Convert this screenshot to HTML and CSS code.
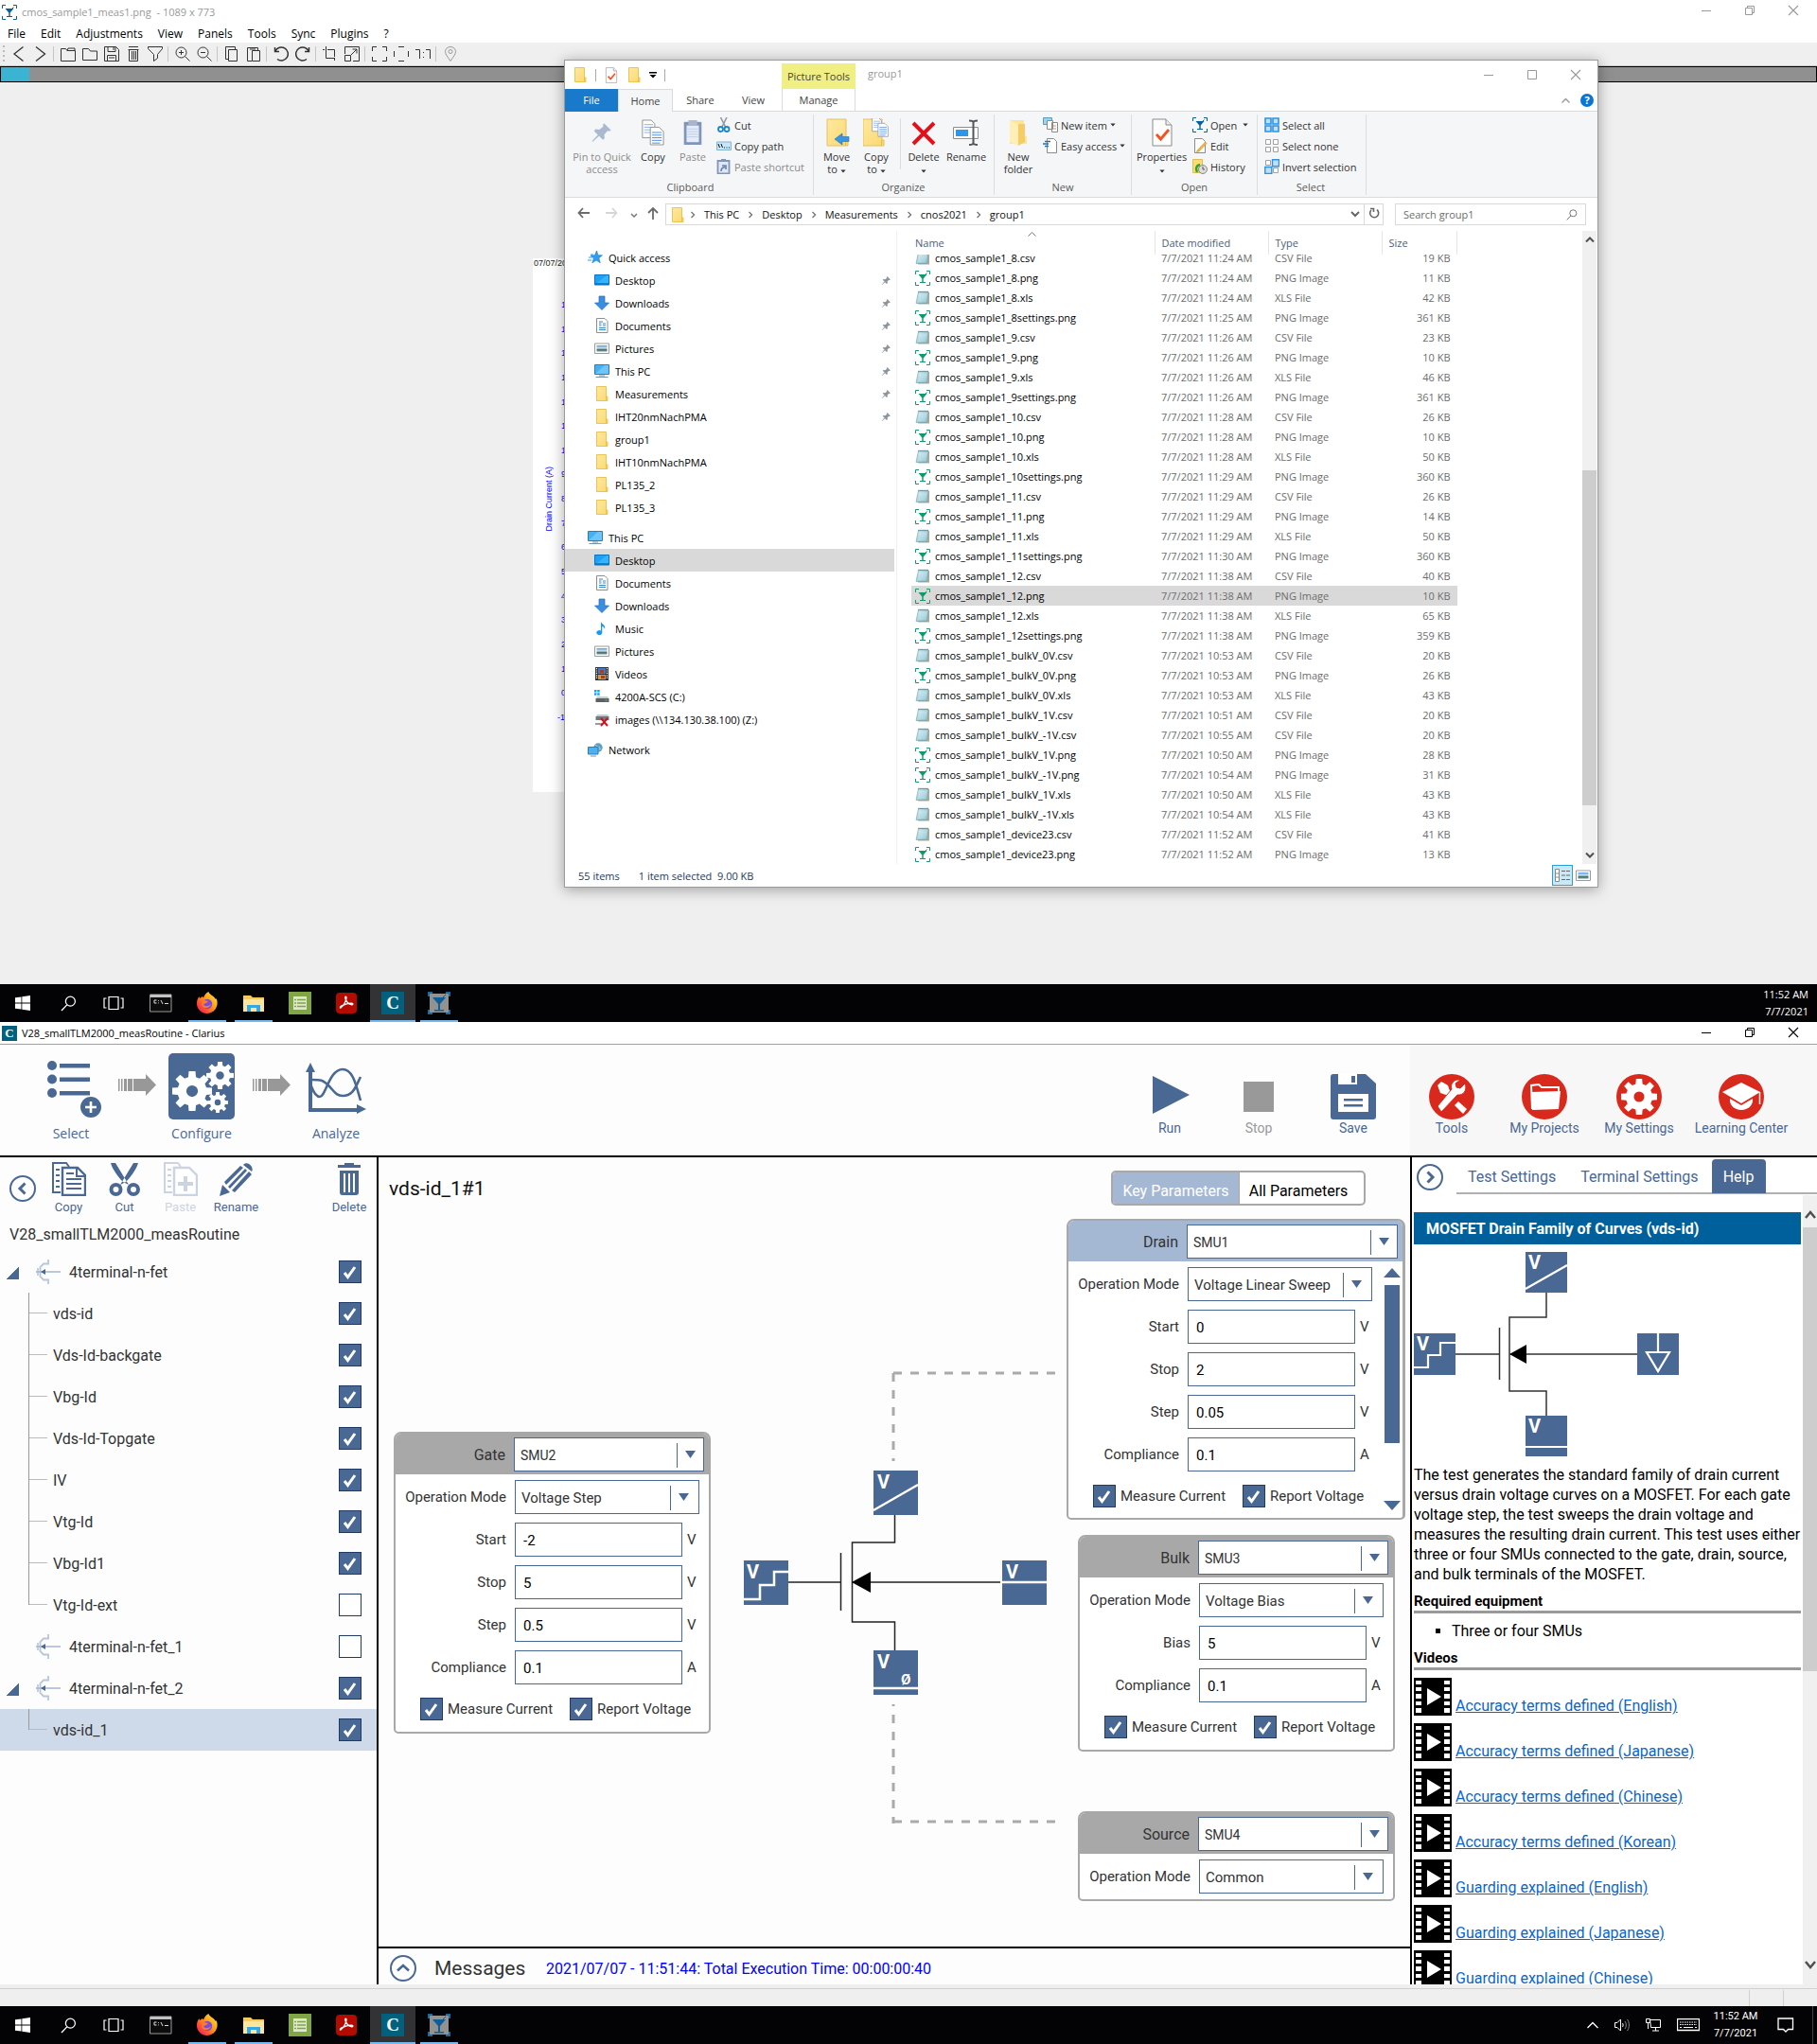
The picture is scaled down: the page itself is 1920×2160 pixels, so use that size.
FILE: index.html
```html
<!DOCTYPE html>
<html lang="en">
<head>
<meta charset="utf-8">
<title>V28_smallTLM2000_measRoutine - Clarius</title>
<link rel="stylesheet" href="styles.css">
</head>
<body>
<svg class="sprite" aria-hidden="true">
  <defs>
    <linearGradient id="g-folder" x1="0" y1="0" x2="1" y2="1"><stop offset="0" stop-color="#ffe9a2"/><stop offset="1" stop-color="#fbd96f"/></linearGradient>
    <linearGradient id="g-fox" x1="1" y1="0" x2="0" y2="1"><stop offset="0" stop-color="#fff14f"/><stop offset=".45" stop-color="#ff980e"/><stop offset=".8" stop-color="#ff3647"/><stop offset="1" stop-color="#e31587"/></linearGradient>
    <linearGradient id="g-sheet" x1="0" y1="0" x2="1" y2="1"><stop offset="0" stop-color="#d9f1f5"/><stop offset="1" stop-color="#7db9cb"/></linearGradient>
    <linearGradient id="g-pic" x1="0" y1="0" x2="0" y2="1"><stop offset="0" stop-color="#5a9fe0"/><stop offset=".5" stop-color="#d4e8f5"/><stop offset=".6" stop-color="#3f6b5a"/><stop offset="1" stop-color="#6f97a8"/></linearGradient>
  </defs>
  <symbol id="glass" viewBox="0 0 16 16"><path d="M.5 4V.5h3.500M12 .5h3.500V4M15.500 12v3.500H12M4 15.500H.5V12" fill="none" stroke="currentColor"/><path d="M3.500 4h9L8.700 8.400V12H11v1H5v-1h2.300V8.400z" fill="currentColor"/><path d="M10.500 4.500l2-2" stroke="currentColor"/></symbol>
  <symbol id="sheet" viewBox="0 0 16 16"><path d="M4 2h11v12.500H3z" fill="#b9a98a"/><path d="M3.500 1.500h10.500l-1 12H1z" fill="url(#g-sheet)" stroke="#6f9dab" stroke-width=".6"/><path d="M3.500 1.500h10.500" stroke="#4e6f7a" stroke-width="1.400" stroke-dasharray="1 1"/><path d="M4 5h8M4 7h8M3.500 9h8M3.300 11h8" stroke="#fff" stroke-opacity=".55" stroke-width=".7"/></symbol>
  <symbol id="folder" viewBox="0 0 16 16"><path d="M2.500 .5h10v10.500h1.500v4.500H2.500z" fill="url(#g-folder)" stroke="#e8bf47" stroke-width=".9"/><path d="M12.500 11v4" stroke="#e8bf47"/></symbol>
  <symbol id="bigfolder" viewBox="0 0 28 30"><path d="M4 1h20v22h2v6H4z" fill="url(#g-folder)" stroke="#e3bd53" stroke-width=".9"/><path d="M23.500 23v6" stroke="#e3bd53"/></symbol>
  <symbol id="star" viewBox="0 0 16 16"><path d="M9.500 1l1.500 4.700 4.500.1-3.700 2.900 1.500 5-4.200-2.600-4.300 2.700 1.600-4.900L3 6l4.500-.2z" fill="#2e9ef0" stroke="#1478c4" stroke-width=".6"/><path d="M1 8h4M0 11h4M3 5h3" stroke="#2e9ef0"/></symbol>
  <symbol id="desk" viewBox="0 0 16 16"><path d="M.5 2.500h15v10.500H.5z" fill="#1ba1f7" stroke="#0a72bf"/><path d="M1 12h14" stroke="#0f5e99"/><path d="M3 11L13 3h2v8z" fill="#37b4ff"/></symbol>
  <symbol id="down" viewBox="0 0 16 16"><path d="M5 1h6v7h4.500L8 15.500.5 8H5z" fill="#3a8ee0" stroke="#226fb9" stroke-width=".7"/></symbol>
  <symbol id="docs" viewBox="0 0 16 16"><path d="M2.500 .5h8.500l3 3v12H2.500z" fill="#fff" stroke="#8a8f94"/><path d="M5 6h2.500M5 8h2.500M9 6h3M9 8h3M5 10.500h7M5 12.500h7M5 4h4" stroke="#3b87c8"/></symbol>
  <symbol id="pics" viewBox="0 0 16 16"><path d="M.5 3h15v10.500H.5z" fill="#fff" stroke="#9b9b9b"/><path d="M2.500 5h11v6.500h-11z" fill="url(#g-pic)"/></symbol>
  <symbol id="pc" viewBox="0 0 16 16"><path d="M.5 1.500h15v10H.5z" fill="#45b1f5" stroke="#2c7fb5"/><path d="M1 11L11 2h4v9z" fill="#6fc5fa"/><path d="M1.500 14.500h13M5 13h6" stroke="#7694a8"/></symbol>
  <symbol id="music" viewBox="0 0 16 16"><path d="M7 1c1 3 5 3 4 8-.5-2-1.500-3-2.700-3v6.500a3 2.500 0 1 1-1.300-2z" fill="#1a97ee"/></symbol>
  <symbol id="video" viewBox="0 0 16 16"><path d="M1 1h14v14H1z" fill="#333"/><path d="M4 2h8v6H4z" fill="#3f79c8"/><path d="M4 9h8v5H4z" fill="#d0a03a"/><path d="M6 4h4v3H6zM7 10h4v3H7z" fill="#a53b2b"/><path d="M2.500 2v12M13.500 2v12" stroke="#fff" stroke-width="1.200" stroke-dasharray="1.200 1.200"/></symbol>
  <symbol id="drive" viewBox="0 0 16 16"><path d="M3 8h11l1.500 2H2z" fill="#c9ccce"/><path d="M1.500 10h14v4h-14z" fill="#5c6165"/><path d="M11.500 12h2" stroke="#3bdc55"/><path d="M0 1h2.500v2.500H0zM3.200 1h2.500v2.500H3.200zM0 4.200h2.500v2.500H0zM3.200 4.200h2.500v2.500H3.200z" fill="#18a4ec"/></symbol>
  <symbol id="netdrive" viewBox="0 0 16 16"><path d="M3 3h11l1.500 2H2z" fill="#c9ccce"/><path d="M1.500 5h14v4h-14z" fill="#74787c"/><path d="M1 13h8" stroke="#999" stroke-width="2"/><path d="M7 7l7 8M14 7l-7 8" stroke="#cf1020" stroke-width="2"/></symbol>
  <symbol id="net" viewBox="0 0 16 16"><circle cx="11" cy="6" r="4.700" fill="#5f9fc0"/><path d="M8 3c2 1 2 3 5 3M10 10c0-2 3-2 4-3" stroke="#b8dcea" fill="none"/><path d="M.5 5.500h10.500v7.500H.5z" fill="#4cb0f2" stroke="#2c7fb5"/><path d="M3 15h6" stroke="#7694a8"/></symbol>
  <symbol id="pin" viewBox="0 0 16 16"><path d="M9.500 1.500l5 5-1.500.7-1-.3-2.300 2.600.2 2.700-1.200.9L6 10.500l-4.500 4-.5-.5 4.200-4.400L2.500 7l1-1.300 2.700.3L9 3.900l-.3-1.200z" fill="currentColor"/></symbol>
  <symbol id="tri" viewBox="0 0 8 5"><path d="M.5.500h7L4 4.500z" fill="currentColor"/></symbol>
  <symbol id="page" viewBox="0 0 28 30"><path d="M4 1h14l6 6v22H4z" fill="#fdfdfd" stroke="#8b8b8b"/><path d="M18 1v6h6" fill="#eee" stroke="#8b8b8b"/><path d="M8 17l4.500 5L21 12" fill="none" stroke="#f4511e" stroke-width="2.800"/></symbol>
  <symbol id="copies" viewBox="0 0 28 30"><path d="M2 1h10l4 4v16H2z" fill="#fdfdfd" stroke="#909090"/><path d="M4 6h10M4 9h10M4 12h10M4 15h10" stroke="#86aee8"/><path d="M11 9h10l5 5v15H11z" fill="#fdfdfd" stroke="#909090"/><path d="M13 15h11M13 18h11M13 21h11M13 24h11M13 27h9" stroke="#4a88dc"/></symbol>
  <symbol id="clip" viewBox="0 0 28 30"><path d="M4 3h20v26H4z" fill="#8194b9"/><path d="M7 7h14v19H7z" fill="#e3ecf8"/><path d="M9 1h10v6H9z" fill="#a9b5cc"/><path d="M8 11h12M8 14h12M8 17h12M8 20h12" stroke="#bccbe4"/></symbol>
  <symbol id="win" viewBox="0 0 16 16"><path d="M0 2.300l6.500-.9v6.200H0zM7.300 1.300L16 0v7.600H7.300zM0 8.400h6.500v6.200L0 13.700zM7.300 8.400H16V16l-8.700-1.200z" fill="#fff"/></symbol>
  <symbol id="lens" viewBox="0 0 18 18"><circle cx="11" cy="6.500" r="5.300" fill="none" stroke="currentColor" stroke-width="1.300"/><path d="M7.200 10.500L1 17" stroke="currentColor" stroke-width="1.400"/></symbol>
  <symbol id="tasks" viewBox="0 0 22 16"><path d="M6 1.500h10v13H6zM3.500 3H1v10h2.500M18.500 3H21v10h-2.500" fill="none" stroke="#fff" stroke-width="1.200"/></symbol>
  <symbol id="cmd" viewBox="0 0 24 20"><path d="M.5 1h22.500v18H.5z" fill="#0c0c0c" stroke="#9a9a9a"/><path d="M1 1h22v3H1z" fill="#bfc3c6"/><path d="M7.500 7H5v3h2.500M9.500 7v.8M9.500 9.500v.8M12 7l2 4M16 10.500h4" stroke="#ddd" fill="none"/></symbol>
  <symbol id="fox" viewBox="0 0 24 24"><path d="M12 23a11 10.500 0 0 1-11-11c0-3 1-5 2.500-7l.5 2 3-2 1 1.500c1-3 3-5.500 5.500-6.500.3 3 5.500 4 7.500 8l.5-1c1.300 3 1.400 5 .8 7.500A11 10.500 0 0 1 12 23z" fill="url(#g-fox)"/><circle cx="12" cy="13" r="5.200" fill="#7a4be0"/><path d="M6 10c3-2 5 0 7 0-1 2-3 2-5 3 1 3 5 3 8 0-1 5-9 6-10 0z" fill="#ff7a2a"/></symbol>
  <symbol id="files" viewBox="0 0 24 20"><path d="M1 2h8l2 2h12v15H1z" fill="#f6c95a"/><path d="M1 6h22v13H1z" fill="#ffe59a"/><path d="M5 19v-7h14v7h-4v-4H9v4z" fill="#35a6e6"/></symbol>
  <symbol id="green" viewBox="0 0 24 24"><path d="M0 0h24v24H0z" fill="#7fa545"/><path d="M5 5h14v14H5z" fill="#dfe8cd"/><path d="M6 8.500h2M9 8.500h9M6 12h2M9 12h9M6 15.500h2M9 15.500h9" stroke="#7fa545" stroke-width="1.500"/></symbol>
  <symbol id="pdf" viewBox="0 0 22 22"><rect width="22" height="22" rx="4" fill="#b30b00"/><path d="M5 16c3-2 6-7 6-11 0-1-1.500-1-1.200.5.500 4 4 7 7.200 7.200 1.300 0 1-1.400-.3-1.500-4-.3-7 1-11 3-1.500 1-1.500 2-.7 1.800z" fill="none" stroke="#fff" stroke-width="1.400"/></symbol>
  <symbol id="cup" viewBox="0 0 24 24"><path d="M2 2h20v20H2z" fill="#929292"/><path d="M1 5V1h4M19 1h4v4M23 19v4h-4M5 23H1v-4" fill="none" stroke="#1a6a9e" stroke-width="2"/><path d="M5 6h14l-6 7v6h4v1.500H7V19h4v-6z" fill="#0f5f96"/><path d="M16 6l3-3" stroke="#0f5f96"/></symbol>
  <symbol id="min" viewBox="0 0 12 12"><path d="M1 6.500h10" stroke="currentColor"/></symbol>
  <symbol id="max" viewBox="0 0 12 12"><path d="M1.500 1.500h9v9h-9z" fill="none" stroke="currentColor"/></symbol>
  <symbol id="restore" viewBox="0 0 12 12"><path d="M1.500 3.500h7v7h-7zM3.500 3.500v-2h7v7h-2" fill="none" stroke="currentColor"/></symbol>
  <symbol id="x" viewBox="0 0 12 12"><path d="M1 1l10 10M11 1L1 11" stroke="currentColor" stroke-width="1.100"/></symbol>
  <symbol id="gt" viewBox="0 0 8 8"><path d="M2.500 1l3 3-3 3" fill="none" stroke="currentColor" stroke-width="1.400"/></symbol>
  <symbol id="fet" viewBox="0 0 26 26"><path d="M13 0v4.500H8L4.500 8v10L8 21.500h5V26" fill="none" stroke="#b9c5d9" stroke-width="1.800"/><path d="M2 9v8" stroke="#c6d0e0" stroke-width="2"/><path d="M0 13h26" stroke="#a9bad4" stroke-width="1.600"/><path d="M5 13l5-3v6z" fill="#4a6894"/></symbol>
  <symbol id="step" viewBox="0 0 40 23"><path d="M0 5h1.500v13H0zM3 5h1.500v13H3zM6 5h3v13H6zM10 5h5v13h-5zM16 5h13V0l11 11.500L29 23v-5H16z" fill="#989898"/></symbol>
  <symbol id="film" viewBox="0 0 40 40"><path d="M0 0h40v40H0z"/><path d="M2 3h6v4H2zM2 10h6v4H2zM2 17h6v5H2zM2 25h6v4H2zM2 32h6v5H2zM32 3h6v4h-6zM32 10h6v4h-6zM32 17h6v5h-6zM32 25h6v4h-6zM32 32h6v5h-6zM14 11l15 9-15 9z" fill="#fff"/></symbol>
  <symbol id="gear8" viewBox="-12 -12 24 24"><path fill-rule="evenodd" d="M-2.300-8.500L-2-12h4l.3 3.500 2.200.9 2.700-2.300 2.800 2.800-2.300 2.700.9 2.200 3.400.2v4l-3.400.3-.9 2.200 2.300 2.700-2.800 2.800-2.700-2.300-2.200.9L2 12h-4l-.3-3.400-2.200-.9-2.700 2.300-2.800-2.800 2.300-2.700-.9-2.200-3.400-.3v-4l3.400-.2.900-2.200-2.300-2.700 2.800-2.800 2.700 2.300zM0-3.500a3.500 3.500 0 1 0 0 7 3.500 3.500 0 0 0 0-7z" fill="#fff"/></symbol>
</svg>

<section class="screen">
  <header class="viewer-title">
    <svg class="navy" width="16" height="16"><use href="#glass"/></svg>
    <span class="grow">cmos_sample1_meas1.png &nbsp;- 1089 x 773</span>
    <span class="winbtns"><button aria-label="Minimize"><svg width="12" height="12"><use href="#min"/></svg></button><button aria-label="Restore"><svg width="12" height="12"><use href="#restore"/></svg></button><button aria-label="Close"><svg width="12" height="12"><use href="#x"/></svg></button></span>
  </header>
  <nav class="menu"><button>File</button><button>Edit</button><button>Adjustments</button><button>View</button><button>Panels</button><button>Tools</button><button>Sync</button><button>Plugins</button><button>?</button></nav>
  <div class="tools">
    <i class="grip"></i>
    <button aria-label="Previous"><svg viewBox="0 0 16 16"><path d="M12.500.5L3 8l9.500 7.500" stroke-width="1.300"/></svg></button>
    <button aria-label="Next"><svg viewBox="0 0 16 16"><path d="M3 .5L12.500 8 3 15.500" stroke-width="1.300"/></svg></button><i></i>
    <button aria-label="Open"><svg viewBox="0 0 16 16"><path d="M.5 15.500v-13h5l1.500 2h8.500v11zM7 4.500l1-2.500h7v2.500"/></svg></button>
    <button aria-label="Folder"><svg viewBox="0 0 16 16"><path d="M.5 14.500v-12h6l2 2.500h7v9.500z"/></svg></button>
    <button aria-label="Save"><svg viewBox="0 0 16 16"><path d="M.5.500h12l3 3v12H.5zM4 .5v5h8v-5M3.500 15.500v-6h9v6M10 1v3M5 12h6"/></svg></button>
    <button aria-label="Trash"><svg viewBox="0 0 16 16"><path d="M3.500 3.500h9v12h-9zM3 .5h10M2.500 3.500h11M6.500 5v9M8.500 5v9M10.500 5v9"/></svg></button>
    <button aria-label="Filter"><svg viewBox="0 0 16 16"><path d="M.5.500h15v2l-5 6v4l-4 3v-7l-6-6z"/></svg></button><i></i>
    <button aria-label="Zoom in"><svg viewBox="0 0 16 16"><circle cx="6.500" cy="6.500" r="5.500"/><path d="M10.500 10.500l5 5M4 6.500h5M6.500 4v5"/></svg></button>
    <button aria-label="Zoom out"><svg viewBox="0 0 16 16"><circle cx="6.500" cy="6.500" r="5.500"/><path d="M10.500 10.500l5 5M4 6.500h5"/></svg></button><i></i>
    <button aria-label="Copy"><svg viewBox="0 0 16 16"><path d="M4.500 3.500h9v12h-9zM4.500 13.500h-3V.500h10v3"/></svg></button>
    <button aria-label="Paste"><svg viewBox="0 0 16 16"><path d="M6 15.500H1.500v-14h11v3M6.500 4.500h8v11h-8zM4 3h6"/></svg></button><i></i>
    <button aria-label="Rotate left"><svg viewBox="0 0 16 16"><path d="M2 5a7 7 0 1 1 2 8.500M1.500 1v4.500H6" stroke-width="1.500"/></svg></button>
    <button aria-label="Rotate right"><svg viewBox="0 0 16 16"><path d="M14 5a7 7 0 1 0-2 8.500M14.500 1v4.500H10" stroke-width="1.500"/></svg></button><i></i>
    <button aria-label="Crop"><svg viewBox="0 0 16 16"><path d="M3.500 0v12.500H13M0 3.500h2M5 3.500h7.500V11M12.500 12v3"/></svg></button>
    <button aria-label="Resize"><svg viewBox="0 0 16 16"><path d="M.5 8v-7.500h15v15H9M.5 9.500h6v6h-6zM7 9l6-6M8.500 3H13v4.500"/></svg></button><i></i>
    <button aria-label="Fit"><svg viewBox="0 0 16 16"><path d="M.5 5V.500H5M11 .5h4.500V5M15.500 11v4.500H11M5 15.500H.500V11"/></svg></button>
    <button aria-label="Fit image"><svg viewBox="0 0 16 16"><path d="M5 .500h6M5 15.500h6M.5 5v6M15.500 5v6"/></svg></button>
    <button aria-label="Actual size"><svg viewBox="0 0 16 16"><path d="M0 3.500h4.500V13M11 3.500h4.500V13M8.500 6v1M8.500 11v1"/></svg></button><i></i>
    <button aria-label="Location"><svg viewBox="0 0 16 16" class="dim"><path d="M8 15.500C5 11 2.500 8.500 2.500 5.500a5.500 5 0 0 1 11 0c0 3-2.500 5.500-5.500 10z"/><circle cx="8" cy="5.500" r="2"/></svg></button>
  </div>
  <div class="progress"><span></span></div>
  <div class="stage"></div>

  <div class="plot">
    <span class="plot-date">07/07/2021</span>
    <span class="plot-axis">Drain Current (A)</span>
    <ol class="ticks"><li>16</li><li>15</li><li>14</li><li>13</li><li>12</li><li>11</li><li>10</li><li>9</li><li>8</li><li>7</li><li>6</li><li>5</li><li>4</li><li>3</li><li>2</li><li>1</li><li>0</li><li class="neg">-1</li></ol>
  </div>

  <section class="explorer">
    <header class="ex-head">
      <div class="ex-quick"><svg width="16" height="16"><use href="#folder"/></svg><i></i><svg width="16" height="17"><use href="#page"/></svg><svg width="16" height="16"><use href="#folder"/></svg><svg width="8" height="8" viewBox="0 0 8 8"><path d="M0 1h8v1.500H0zM.5 4h7L4 7.500z"/></svg><i></i></div>
      <div class="ex-ctx">Picture Tools</div>
      <span class="grow ex-name">group1</span>
      <span class="winbtns"><button aria-label="Minimize"><svg width="12" height="12"><use href="#min"/></svg></button><button aria-label="Maximize"><svg width="12" height="12"><use href="#max"/></svg></button><button aria-label="Close"><svg width="12" height="12"><use href="#x"/></svg></button></span>
    </header>
    <nav class="ex-tabs">
      <button class="t-file">File</button><button class="t-home">Home</button><button class="t-share">Share</button><button class="t-view">View</button><button class="t-manage">Manage</button>
      <span class="grow"></span>
      <svg width="9" height="6" viewBox="0 0 9 6"><path d="M.5 5.500l4-4 4 4" fill="none" stroke="#999" stroke-width="1.400"/></svg>
      <span class="help-dot">?</span>
    </nav>
    <div class="ribbon">
      <div class="group g-clip"><div class="items">
        <button class="big w64 off"><svg width="24" height="24" class="pinbig"><use href="#pin"/></svg><span>Pin to Quick access</span></button>
        <button class="big w44"><svg width="26" height="30"><use href="#copies"/></svg><span>Copy</span></button>
        <button class="big w40 off"><svg width="26" height="30"><use href="#clip"/></svg><span>Paste</span></button>
        <div class="stack">
          <button><svg width="16" height="16" viewBox="0 0 16 16"><path d="M4.500 0l5 10M11 0L6 10" stroke="#8f9aa6" stroke-width="1.600"/><circle cx="4.500" cy="12.500" r="2.500" fill="none" stroke="#1c86c8" stroke-width="1.800"/><circle cx="11" cy="12.500" r="2.500" fill="none" stroke="#1c86c8" stroke-width="1.800"/></svg>Cut</button>
          <button><svg width="16" height="16" viewBox="0 0 16 16"><path d="M.5 4h15v8.500H.500z" fill="#c8e6f8" stroke="#82b4d4"/><path d="M2 6l1.500 4M5 6l1.500 4M8 10h1M10.500 10h1M13 10h1" stroke="#111"/></svg>Copy path</button>
          <button class="off"><svg width="16" height="16" viewBox="0 0 16 16"><path d="M1.500 2h12v13.500h-12z" fill="#dfe8f4" stroke="#8194b9" stroke-width="1.800"/><path d="M5 0h5v3H5z" fill="#8194b9"/><path d="M5 13c0-3 1-4 4-4.500M6 7h4v4" stroke="#6a80ab" fill="none" stroke-width="1.600"/></svg>Paste shortcut</button>
        </div></div><p>Clipboard</p></div>
      <div class="group g-org"><div class="items">
        <button class="big w42"><svg width="28" height="30" viewBox="0 0 28 30"><use href="#bigfolder" width="28" height="30"/><path d="M12 22l8-6v3.500h7v5h-7V28z" fill="#3a96e3" stroke="#1f6fb5" stroke-width=".6"/></svg><span>Move<br>to <svg width="6" height="4"><use href="#tri"/></svg></span></button>
        <button class="big w42"><svg width="28" height="30" viewBox="0 0 28 30"><use href="#bigfolder" width="28" height="30" x="-4"/><use href="#copies" x="8" y="-1" width="20" height="21"/></svg><span>Copy<br>to <svg width="6" height="4"><use href="#tri"/></svg></span></button>
        <i class="thin"></i>
        <button class="big w40"><svg width="26" height="30" viewBox="0 0 26 30"><path d="M2 5l22 22M24 5L2 27" stroke="#e0101c" stroke-width="4"/></svg><span>Delete <svg width="6" height="4"><use href="#tri"/></svg></span></button>
        <button class="big w50"><svg width="28" height="30" viewBox="0 0 28 30"><path d="M.5 9.500h26v12H.500z" fill="#fff" stroke="#8c8c8c"/><path d="M3 12h13v7H3z" fill="#2c96e8"/><path d="M21.500 4v23M17 2.500c3 0 4.500.500 4.500 2 0-1.500 1.500-2 4.500-2M17 28c3 0 4.500-.5 4.500-2 0 1.500 1.500 2 4.500 2" stroke="#555" stroke-width="2" fill="none"/></svg><span>Rename</span></button>
      </div><p>Organize</p></div>
      <div class="group g-new"><div class="items">
        <button class="big w42"><svg width="22" height="30" viewBox="0 0 22 30"><path d="M2 2h15v16l3 1v8H2z" fill="#ffe494"/><path d="M2 2l9 4v23l-9-4z" fill="#ffeeb5"/><path d="M11 6h7v19l-7 4z" fill="#f5cd66"/></svg><span>New folder</span></button>
        <div class="stack">
          <button><svg width="16" height="16" viewBox="0 0 16 16"><path d="M.5.500h9v7h-9z" fill="#9dd3ef" stroke="#5a9dc0"/><path d="M4.500 3.500h6v9h-6zM9.500 5.500h6v10h-6z" fill="#fff" stroke="#8b8b8b"/><path d="M11 9h3M11 12h3" stroke="#e08a7a"/></svg>New item<svg width="6" height="4"><use href="#tri"/></svg></button>
          <button><svg width="16" height="16" viewBox="0 0 16 16"><path d="M4.500.500h7l3 3v12h-10z" fill="#fff" stroke="#8b8b8b"/><path d="M2 3.500h6M0 6h6M2 8.500h4" stroke="#2a72a8" stroke-width="1.300"/></svg>Easy access<svg width="6" height="4"><use href="#tri"/></svg></button>
        </div></div><p>New</p></div>
      <div class="group g-open"><div class="items">
        <button class="big w55"><svg width="28" height="30"><use href="#page"/></svg><span>Properties <svg width="6" height="4"><use href="#tri"/></svg></span></button>
        <div class="stack">
          <button><svg width="16" height="16" class="navy"><use href="#glass"/></svg>Open&nbsp;<svg width="6" height="4"><use href="#tri"/></svg></button>
          <button><svg width="16" height="16" viewBox="0 0 16 16"><path d="M2.500.500h8l3 3v12h-11z" fill="#fff" stroke="#8b8b8b"/><path d="M5 13l8.500-9 1.500 1.500L7 14l-2.500.500z" fill="#f5b83d" stroke="#b98220" stroke-width=".5"/></svg>Edit</button>
          <button><svg width="16" height="16" viewBox="0 0 16 16"><path d="M.5.500h10v14H.500z" fill="#fbdc77" stroke="#e3bd53"/><circle cx="11" cy="11" r="4.500" fill="#ddd" stroke="#888"/><path d="M11 8v3h2" stroke="#555" fill="none"/><path d="M8 6c-4 1-5 4-3 8" stroke="#2ca52c" stroke-width="2.500" fill="none"/></svg>History</button>
        </div></div><p>Open</p></div>
      <div class="group g-sel"><div class="items">
        <div class="stack">
          <button><svg width="16" height="16" viewBox="0 0 16 16"><path d="M1 1h6v6H1zM9 1h6v6H9zM1 9h6v6H1zM9 9h6v6H9z" fill="#bfe0fa" stroke="#2e93e0" stroke-width="1.600"/></svg>Select all</button>
          <button><svg width="16" height="16" viewBox="0 0 16 16"><path d="M1.500 1.500h5v5h-5zM9.500 1.500h5v5h-5zM1.500 9.500h5v5h-5zM9.500 9.500h5v5h-5z" fill="#fff" stroke="#a0a0a0"/></svg>Select none</button>
          <button><svg width="16" height="16" viewBox="0 0 16 16"><path d="M1.500 1.500h5v5h-5zM9.500 9.500h5v5h-5z" fill="#fff" stroke="#a0a0a0"/><path d="M8.500.800h7v7h-7zM.800 8.500h7v7h-7z" fill="#bfe0fa" stroke="#2e93e0" stroke-width="1.400"/></svg>Invert selection</button>
        </div></div><p>Select</p></div>
    </div>
    <div class="address">
      <button class="arr" aria-label="Back"><svg width="14" height="12" viewBox="0 0 14 12"><path d="M6 1L1.500 6 6 11M1.500 6H13" fill="none" stroke="#6b6b6b" stroke-width="1.800"/></svg></button>
      <button class="arr" aria-label="Forward"><svg width="14" height="12" viewBox="0 0 14 12"><path d="M8 1l4.500 5L8 11M12.500 6H1" fill="none" stroke="#d6d6d6" stroke-width="1.800"/></svg></button>
      <button class="arr sm" aria-label="Recent"><svg width="8" height="6" viewBox="0 0 8 6"><path d="M1 1l3 3 3-3" fill="none" stroke="#777" stroke-width="1.500"/></svg></button>
      <button class="arr sm" aria-label="Up"><svg width="12" height="13" viewBox="0 0 12 13"><path d="M1 6l5-5 5 5M6 1v12" fill="none" stroke="#6b6b6b" stroke-width="1.800"/></svg></button>
      <div class="crumbs"><svg width="16" height="16" class="here"><use href="#folder"/></svg><svg width="8" height="8"><use href="#gt"/></svg><a href="#">This PC</a><svg width="8" height="8"><use href="#gt"/></svg><a href="#">Desktop</a><svg width="8" height="8"><use href="#gt"/></svg><a href="#">Measurements</a><svg width="8" height="8"><use href="#gt"/></svg><a href="#">cnos2021</a><svg width="8" height="8"><use href="#gt"/></svg><a href="#">group1</a><span class="grow"></span><svg width="10" height="7" viewBox="0 0 10 7"><path d="M1 1l4 4 4-4" fill="none" stroke="#666" stroke-width="2"/></svg><button class="reload" aria-label="Refresh"><svg width="12" height="12" viewBox="0 0 12 12"><path d="M3 3a4.500 4.500 0 1 0 6-.3M2 1.500h3.500V5" fill="none" stroke="#666" stroke-width="1.600"/></svg></button></div>
      <label class="search"><input type="text" placeholder="Search group1" aria-label="Search group1"><svg width="12" height="12"><use href="#lens"/></svg></label>
    </div>
    <div class="ex-body">
      <ul class="side">
        <li class="top"><svg><use href="#star"/></svg>Quick access</li>
        <li><svg><use href="#desk"/></svg>Desktop<svg class="pin"><use href="#pin"/></svg></li>
        <li><svg><use href="#down"/></svg>Downloads<svg class="pin"><use href="#pin"/></svg></li>
        <li><svg><use href="#docs"/></svg>Documents<svg class="pin"><use href="#pin"/></svg></li>
        <li><svg><use href="#pics"/></svg>Pictures<svg class="pin"><use href="#pin"/></svg></li>
        <li><svg><use href="#pc"/></svg>This PC<svg class="pin"><use href="#pin"/></svg></li>
        <li><svg><use href="#folder"/></svg>Measurements<svg class="pin"><use href="#pin"/></svg></li>
        <li><svg><use href="#folder"/></svg>IHT20nmNachPMA<svg class="pin"><use href="#pin"/></svg></li>
        <li><svg><use href="#folder"/></svg>group1</li>
        <li><svg><use href="#folder"/></svg>IHT10nmNachPMA</li>
        <li><svg><use href="#folder"/></svg>PL135_2</li>
        <li><svg><use href="#folder"/></svg>PL135_3</li>
        <li class="top"><svg><use href="#pc"/></svg>This PC</li>
        <li class="on"><svg><use href="#desk"/></svg>Desktop</li>
        <li><svg><use href="#docs"/></svg>Documents</li>
        <li><svg><use href="#down"/></svg>Downloads</li>
        <li><svg><use href="#music"/></svg>Music</li>
        <li><svg><use href="#pics"/></svg>Pictures</li>
        <li><svg><use href="#video"/></svg>Videos</li>
        <li><svg><use href="#drive"/></svg>4200A-SCS (C:)</li>
        <li><svg><use href="#netdrive"/></svg>images (\\134.130.38.100) (Z:)</li>
        <li class="top"><svg><use href="#net"/></svg>Network</li>
      </ul>
      <div class="list">
        <svg class="sort" width="9" height="5" viewBox="0 0 9 5"><path d="M.5 4.500l4-4 4 4" fill="none" stroke="#777"/></svg>
        <table>
          <thead><tr><th>Name</th><th>Date modified</th><th>Type</th><th>Size</th></tr></thead>
          <tbody>
          <tr class="cut"><td><div><svg><use href="#sheet"/></svg>cmos_sample1_8.csv</div></td><td><div>7/7/2021 11:24 AM</div></td><td><div>CSV File</div></td><td><div>19 KB</div></td></tr>
          <tr><td><svg><use href="#glass"/></svg>cmos_sample1_8.png</td><td>7/7/2021 11:24 AM</td><td>PNG Image</td><td>11 KB</td></tr>
          <tr><td><svg><use href="#sheet"/></svg>cmos_sample1_8.xls</td><td>7/7/2021 11:24 AM</td><td>XLS File</td><td>42 KB</td></tr>
          <tr><td><svg><use href="#glass"/></svg>cmos_sample1_8settings.png</td><td>7/7/2021 11:25 AM</td><td>PNG Image</td><td>361 KB</td></tr>
          <tr><td><svg><use href="#sheet"/></svg>cmos_sample1_9.csv</td><td>7/7/2021 11:26 AM</td><td>CSV File</td><td>23 KB</td></tr>
          <tr><td><svg><use href="#glass"/></svg>cmos_sample1_9.png</td><td>7/7/2021 11:26 AM</td><td>PNG Image</td><td>10 KB</td></tr>
          <tr><td><svg><use href="#sheet"/></svg>cmos_sample1_9.xls</td><td>7/7/2021 11:26 AM</td><td>XLS File</td><td>46 KB</td></tr>
          <tr><td><svg><use href="#glass"/></svg>cmos_sample1_9settings.png</td><td>7/7/2021 11:26 AM</td><td>PNG Image</td><td>361 KB</td></tr>
          <tr><td><svg><use href="#sheet"/></svg>cmos_sample1_10.csv</td><td>7/7/2021 11:28 AM</td><td>CSV File</td><td>26 KB</td></tr>
          <tr><td><svg><use href="#glass"/></svg>cmos_sample1_10.png</td><td>7/7/2021 11:28 AM</td><td>PNG Image</td><td>10 KB</td></tr>
          <tr><td><svg><use href="#sheet"/></svg>cmos_sample1_10.xls</td><td>7/7/2021 11:28 AM</td><td>XLS File</td><td>50 KB</td></tr>
          <tr><td><svg><use href="#glass"/></svg>cmos_sample1_10settings.png</td><td>7/7/2021 11:29 AM</td><td>PNG Image</td><td>360 KB</td></tr>
          <tr><td><svg><use href="#sheet"/></svg>cmos_sample1_11.csv</td><td>7/7/2021 11:29 AM</td><td>CSV File</td><td>26 KB</td></tr>
          <tr><td><svg><use href="#glass"/></svg>cmos_sample1_11.png</td><td>7/7/2021 11:29 AM</td><td>PNG Image</td><td>14 KB</td></tr>
          <tr><td><svg><use href="#sheet"/></svg>cmos_sample1_11.xls</td><td>7/7/2021 11:29 AM</td><td>XLS File</td><td>50 KB</td></tr>
          <tr><td><svg><use href="#glass"/></svg>cmos_sample1_11settings.png</td><td>7/7/2021 11:30 AM</td><td>PNG Image</td><td>360 KB</td></tr>
          <tr><td><svg><use href="#sheet"/></svg>cmos_sample1_12.csv</td><td>7/7/2021 11:38 AM</td><td>CSV File</td><td>40 KB</td></tr>
          <tr class="on"><td><svg><use href="#glass"/></svg>cmos_sample1_12.png</td><td>7/7/2021 11:38 AM</td><td>PNG Image</td><td>10 KB</td></tr>
          <tr><td><svg><use href="#sheet"/></svg>cmos_sample1_12.xls</td><td>7/7/2021 11:38 AM</td><td>XLS File</td><td>65 KB</td></tr>
          <tr><td><svg><use href="#glass"/></svg>cmos_sample1_12settings.png</td><td>7/7/2021 11:38 AM</td><td>PNG Image</td><td>359 KB</td></tr>
          <tr><td><svg><use href="#sheet"/></svg>cmos_sample1_bulkV_0V.csv</td><td>7/7/2021 10:53 AM</td><td>CSV File</td><td>20 KB</td></tr>
          <tr><td><svg><use href="#glass"/></svg>cmos_sample1_bulkV_0V.png</td><td>7/7/2021 10:53 AM</td><td>PNG Image</td><td>26 KB</td></tr>
          <tr><td><svg><use href="#sheet"/></svg>cmos_sample1_bulkV_0V.xls</td><td>7/7/2021 10:53 AM</td><td>XLS File</td><td>43 KB</td></tr>
          <tr><td><svg><use href="#sheet"/></svg>cmos_sample1_bulkV_1V.csv</td><td>7/7/2021 10:51 AM</td><td>CSV File</td><td>20 KB</td></tr>
          <tr><td><svg><use href="#sheet"/></svg>cmos_sample1_bulkV_-1V.csv</td><td>7/7/2021 10:55 AM</td><td>CSV File</td><td>20 KB</td></tr>
          <tr><td><svg><use href="#glass"/></svg>cmos_sample1_bulkV_1V.png</td><td>7/7/2021 10:50 AM</td><td>PNG Image</td><td>28 KB</td></tr>
          <tr><td><svg><use href="#glass"/></svg>cmos_sample1_bulkV_-1V.png</td><td>7/7/2021 10:54 AM</td><td>PNG Image</td><td>31 KB</td></tr>
          <tr><td><svg><use href="#sheet"/></svg>cmos_sample1_bulkV_1V.xls</td><td>7/7/2021 10:50 AM</td><td>XLS File</td><td>43 KB</td></tr>
          <tr><td><svg><use href="#sheet"/></svg>cmos_sample1_bulkV_-1V.xls</td><td>7/7/2021 10:54 AM</td><td>XLS File</td><td>43 KB</td></tr>
          <tr><td><svg><use href="#sheet"/></svg>cmos_sample1_device23.csv</td><td>7/7/2021 11:52 AM</td><td>CSV File</td><td>41 KB</td></tr>
          <tr><td><svg><use href="#glass"/></svg>cmos_sample1_device23.png</td><td>7/7/2021 11:52 AM</td><td>PNG Image</td><td>13 KB</td></tr>
          </tbody>
        </table>
      </div>
      <div class="bar"><svg width="10" height="7" viewBox="0 0 10 7"><path d="M1 5.500l4-4 4 4" fill="none" stroke="#505050" stroke-width="2"/></svg><i class="thumb"></i><svg width="10" height="7" viewBox="0 0 10 7"><path d="M1 1.500l4 4 4-4" fill="none" stroke="#505050" stroke-width="2"/></svg></div>
    </div>
    <footer class="status"><span>55 items</span><span>1 item selected &nbsp;9.00 KB</span><span class="grow"></span><button class="view on" aria-label="Details"><svg width="18" height="16" viewBox="0 0 18 16"><path d="M1.500 1.500h4v13h-4zM1.500 6h4M1.500 10h4" fill="#fff" stroke="#888"/><path d="M8 3.500h4M13 3.500h4M8 8h4M13 8h4M8 12.500h4M13 12.500h4" stroke="#666"/></svg></button><button class="view" aria-label="Large icons"><svg width="16" height="16"><use href="#pics"/></svg></button></footer>
  </section>

  <footer class="taskbar">
    <button aria-label="Start"><svg width="16" height="16"><use href="#win"/></svg></button><button aria-label="Search"><svg width="17" height="17"><use href="#lens"/></svg></button><button aria-label="Task view"><svg width="22" height="16"><use href="#tasks"/></svg></button><button aria-label="Command prompt"><svg width="24" height="20"><use href="#cmd"/></svg></button><button class="run" aria-label="Firefox"><svg width="24" height="24"><use href="#fox"/></svg></button><button class="run" aria-label="File Explorer"><svg width="24" height="20"><use href="#files"/></svg></button><button aria-label="Tool"><svg width="24" height="24"><use href="#green"/></svg></button><button aria-label="Acrobat"><svg width="22" height="22"><use href="#pdf"/></svg></button><button class="run on" aria-label="Clarius"><span class="cbig">C</span></button><button class="run" aria-label="Image viewer"><svg width="24" height="24"><use href="#cup"/></svg></button>
    <span class="grow"></span><time class="clock end">11:52 AM<br>7/7/2021</time>
  </footer>
</section>

<section class="screen clarius">
  <header class="c-title"><span class="csm">C</span><span class="grow">V28_smallTLM2000_measRoutine - Clarius</span><span class="winbtns"><button aria-label="Minimize"><svg width="12" height="12"><use href="#min"/></svg></button><button aria-label="Restore"><svg width="12" height="12"><use href="#restore"/></svg></button><button aria-label="Close"><svg width="12" height="12"><use href="#x"/></svg></button></span></header>
  <div class="c-head">
    <button class="stage-btn s1"><svg width="68" height="70" viewBox="-8 0 68 70"><g fill="#4a6894"><circle cx="6" cy="13" r="5"/><circle cx="6" cy="27.500" r="5"/><circle cx="6" cy="42" r="5"/><path d="M14 11h32v4.500H14zM14 25.500h32V30H14zM14 40h32v4.500H14z"/><circle cx="47" cy="57" r="11"/></g><path d="M47 51v12M41 57h12" stroke="#fff" stroke-width="2.600"/></svg>Select</button>
    <svg class="step" width="40" height="23"><use href="#step"/></svg>
    <button class="stage-btn s2"><svg width="70" height="70" viewBox="0 0 70 70"><rect width="70" height="70" rx="5" fill="#4a6894"/><use href="#gear8" x="4" y="19" width="42" height="42"/><use href="#gear8" x="40" y="9" width="29" height="29"/><use href="#gear8" x="41" y="41" width="22" height="22"/></svg>Configure</button>
    <svg class="step" width="40" height="23"><use href="#step"/></svg>
    <button class="stage-btn"><svg width="64" height="70" viewBox="0 0 64 70"><g fill="none" stroke="#4a6894" stroke-width="2.600"><path d="M5 14v46h50" stroke-width="4"/><path d="M6 28c10 0 12 0 18 6 6 6 8 11 15 11 11 0 13-8 19-20"/><path d="M6 35c3 8 6 11 9 11 6 0 10-29 24-29 11 0 14 16 19 33"/></g><path d="M5 10l5 10H0zM64 59l-10 5V54z" fill="#4a6894"/></svg>Analyze</button>
    <span class="grow"></span>
    <div class="acts">
      <button><svg width="48" height="48" viewBox="0 0 48 48"><path d="M6 2l39 20L6 42z" fill="#4a6894"/></svg>Run</button>
      <button class="gray"><svg width="48" height="48" viewBox="0 0 48 48"><path d="M8 8h32v32H8z" fill="#999"/></svg>Stop</button>
      <button><svg width="48" height="48" viewBox="0 0 48 48"><path d="M3 0h34l11 10v35a3 3 0 0 1-3 3H3a3 3 0 0 1-3-3V3a3 3 0 0 1 3-3z" fill="#4a6894"/><path d="M8 0h20v11H8zM8 21h32v19H8z" fill="#fff"/><path d="M22 2h4v7h-4zM14 26h20v2.500H14zM14 32h20v2.500H14z" fill="#4a6894"/></svg>Save</button>
    </div>
    <div class="reds">
      <button><svg width="48" height="48" viewBox="0 0 48 48"><circle cx="24" cy="24" r="24" fill="#d9291c"/><path d="M9 12l4-4 7 4 2 6 6 6-4 4-6-6-6-2z" fill="#fff"/><path d="M31 29l9 8-4 5-9-9z" fill="#fff"/><path d="M38 10l-5 5-4-1-1-4 5-4c-7-1-11 5-9 10L9 34l4 6L30 22c6 1 11-5 8-12z" fill="#fff" stroke="#d9291c"/></svg>Tools</button>
      <button><svg width="48" height="48" viewBox="0 0 48 48"><circle cx="24" cy="24" r="24" fill="#d9291c"/><path d="M11 37L10 12l8-1 3 3h18v4" fill="none" stroke="#fff" stroke-width="2"/><path d="M10 19l31-1-2 19-28 1z" fill="#fff"/></svg>My Projects</button>
      <button><svg width="48" height="48" viewBox="0 0 48 48"><circle cx="24" cy="24" r="24" fill="#d9291c"/><use href="#gear8" x="5" y="5" width="38" height="38"/></svg>My Settings</button>
      <button><svg width="48" height="48" viewBox="0 0 48 48"><circle cx="24" cy="24" r="24" fill="#d9291c"/><path d="M24 9l20 10-20 12L4 19z" fill="#fff"/><path d="M12 26l12 7 12-7c1 7-5 12-12 12s-13-5-12-12z" fill="#fff"/><path d="M43.500 19v13" stroke="#fff" stroke-width="1.500"/></svg>Learning Center</button>
    </div>
  </div>

  <div class="c-body">
    <aside class="tree">
      <div class="tree-tools">
        <button class="round" aria-label="Collapse"><svg width="28" height="28" viewBox="0 0 28 28"><circle cx="14" cy="14" r="13"/><path d="M16.500 8.500L11 14l5.500 5.500" stroke-width="3"/></svg></button>
        <button><svg width="36" height="36" viewBox="0 0 36 36"><path d="M9 32H1V1h14l3 4M4 8h4M4 14h4M4 20h4M4 26h4" fill="none" stroke="#4a6894" stroke-width="2"/><path d="M11 6h16l8 8v21H11z" fill="#fff" stroke="#4a6894" stroke-width="2.400"/><path d="M26 6v9h9M15 12h8M15 18h16M15 23h16M15 28h16" fill="none" stroke="#4a6894" stroke-width="2"/></svg>Copy</button>
        <button><svg width="36" height="36" viewBox="0 0 36 36"><path d="M3 1c2 7 8 15 13 20l6 3L8 1zM32 1c-2 7-8 15-13 20l-6 3L27 1z" fill="#4a6894"/><g fill="none" stroke="#4a6894" stroke-width="4"><circle cx="8.500" cy="29" r="5"/><circle cx="27" cy="29" r="5"/></g></svg>Cut</button>
        <button class="faint"><svg width="36" height="36" viewBox="0 0 36 36"><path d="M9 32H1V1h14l3 4M4 8h4M4 14h4M4 20h4M4 26h4" fill="none" stroke="#ccd4e2" stroke-width="2"/><path d="M11 6h16l8 8v21H11z" fill="#fff" stroke="#ccd4e2" stroke-width="2.400"/><path d="M23 15v16M15 23h16" stroke="#ccd4e2" stroke-width="4"/></svg>Paste</button>
        <button><svg width="36" height="36" viewBox="0 0 36 36"><path d="M0 36l3-12 8 8zM25 3c4-5 12 2 9 7z" fill="#4a6894"/><path d="M5 21L22 4l3 2L7 24zM9 26L27 7l2 2-18 19zM13 30L31 10l3 3-18 19z" fill="#4a6894"/></svg>Rename</button>
        <span class="grow"></span>
        <button><svg width="26" height="36" viewBox="0 0 26 36"><path d="M8 3V1h10v2h7v3H1V3zM3 9h20v23a3 3 0 0 1-3 3H6a3 3 0 0 1-3-3z" fill="#4a6894"/><path d="M8 12v20M13 12v20M18 12v20" stroke="#fff" stroke-width="2"/></svg>Delete</button>
      </div>
      <p class="project">V28_smallTLM2000_measRoutine</p>
      <ul>
        <li><label class="node open"><svg width="26" height="26"><use href="#fet"/></svg><span>4terminal-n-fet</span><input type="checkbox" checked></label></li>
        <li><label class="leaf"><span>vds-id</span><input type="checkbox" checked></label></li>
        <li><label class="leaf"><span>Vds-Id-backgate</span><input type="checkbox" checked></label></li>
        <li><label class="leaf"><span>Vbg-Id</span><input type="checkbox" checked></label></li>
        <li><label class="leaf"><span>Vds-Id-Topgate</span><input type="checkbox" checked></label></li>
        <li><label class="leaf"><span>IV</span><input type="checkbox" checked></label></li>
        <li><label class="leaf"><span>Vtg-Id</span><input type="checkbox" checked></label></li>
        <li><label class="leaf"><span>Vbg-Id1</span><input type="checkbox" checked></label></li>
        <li><label class="leaf last"><span>Vtg-Id-ext</span><input type="checkbox"></label></li>
        <li><label class="node"><svg width="26" height="26"><use href="#fet"/></svg><span>4terminal-n-fet_1</span><input type="checkbox"></label></li>
        <li><label class="node open"><svg width="26" height="26"><use href="#fet"/></svg><span>4terminal-n-fet_2</span><input type="checkbox" checked></label></li>
        <li><label class="leaf last on"><span>vds-id_1</span><input type="checkbox" checked></label></li>
      </ul>
    </aside>

    <main class="work">
      <div class="work-head"><h1>vds-id_1#1</h1><div class="seg"><button class="on">Key Parameters</button><button>All Parameters</button></div></div>
      <div class="board">
        <form class="panel gate">
          <div class="p-head"><label for="g-smu">Gate</label><select id="g-smu"><option>SMU2</option></select></div>
          <div class="p-body">
            <div class="row"><label for="g-op">Operation Mode</label><select id="g-op"><option>Voltage Step</option></select></div>
            <div class="row"><label for="g-start">Start</label><input type="text" id="g-start" value="-2"><span>V</span></div>
            <div class="row"><label for="g-stop">Stop</label><input type="text" id="g-stop" value="5"><span>V</span></div>
            <div class="row"><label for="g-step">Step</label><input type="text" id="g-step" value="0.5"><span>V</span></div>
            <div class="row"><label for="g-comp">Compliance</label><input type="text" id="g-comp" value="0.1"><span>A</span></div>
            <div class="checks"><label><input type="checkbox" checked>Measure Current</label><label><input type="checkbox" checked>Report Voltage</label></div>
          </div>
        </form>
        <svg class="wires" viewBox="0 0 376 500" width="376" height="500">
          <g fill="none" stroke="#aaa" stroke-width="3" stroke-dasharray="9 9"><path d="M193 104V11" stroke-dashoffset="6"/><path d="M193 11h174"/><path d="M193 361v126" stroke-dashoffset="7"/><path d="M193 485h174"/></g>
          <g fill="none" stroke="#222" stroke-width="1.500"><path d="M194.500 161v29H149.500v84h45v30M137.500 201v61M82 232h55.500M150 232h156"/></g>
          <path d="M149 232l20-11v22z"/>
          <g fill="#4a6894"><path d="M172 114h47v47h-47zM35 209h47v47H35zM308 209h47v47h-47zM172 304h47v47h-47z"/></g>
          <g fill="none" stroke="#fff" stroke-width="2.500"><path d="M172 156l47-27M35 250h17v-15h15v-14h15M308 232h47M172 344h47"/></g>
          <g class="vtext"><text x="176" y="133">V</text><text x="38" y="228">V</text><text x="312" y="228">V</text><text x="176" y="323">V</text><text class="o" x="201" y="340">Ø</text></g>
        </svg>
        <div class="right-stack">
          <form class="panel drain">
            <div class="p-head"><label for="d-smu">Drain</label><select id="d-smu"><option>SMU1</option></select></div>
            <div class="p-split">
            <div class="p-body">
              <div class="row"><label for="d-op">Operation Mode</label><select id="d-op"><option>Voltage Linear Sweep</option></select></div>
              <div class="row"><label for="d-start">Start</label><input type="text" id="d-start" value="0"><span>V</span></div>
              <div class="row"><label for="d-stop">Stop</label><input type="text" id="d-stop" value="2"><span>V</span></div>
              <div class="row"><label for="d-step">Step</label><input type="text" id="d-step" value="0.05"><span>V</span></div>
              <div class="row"><label for="d-comp">Compliance</label><input type="text" id="d-comp" value="0.1"><span>A</span></div>
              <div class="checks"><label><input type="checkbox" checked>Measure Current</label><label><input type="checkbox" checked>Report Voltage</label></div>
            </div>
            <div class="p-bar"><svg width="18" height="10" viewBox="0 0 18 10"><path d="M0 10L9 0l9 10z" fill="#4a6894"/></svg><i></i><svg width="18" height="10" viewBox="0 0 18 10"><path d="M0 0l9 10 9-10z" fill="#4a6894"/></svg></div>
            </div>
          </form>
          <form class="panel bulk">
            <div class="p-head"><label for="b-smu">Bulk</label><select id="b-smu"><option>SMU3</option></select></div>
            <div class="p-body">
              <div class="row"><label for="b-op">Operation Mode</label><select id="b-op"><option>Voltage Bias</option></select></div>
              <div class="row"><label for="b-bias">Bias</label><input type="text" id="b-bias" value="5"><span>V</span></div>
              <div class="row"><label for="b-comp">Compliance</label><input type="text" id="b-comp" value="0.1"><span>A</span></div>
              <div class="checks"><label><input type="checkbox" checked>Measure Current</label><label><input type="checkbox" checked>Report Voltage</label></div>
            </div>
          </form>
          <form class="panel source">
            <div class="p-head"><label for="s-smu">Source</label><select id="s-smu"><option>SMU4</option></select></div>
            <div class="p-body">
              <div class="row"><label for="s-op">Operation Mode</label><select id="s-op"><option>Common</option></select></div>
            </div>
          </form>
        </div>
      </div>
      <div class="messages"><button class="round" aria-label="Expand messages"><svg width="28" height="28" viewBox="0 0 28 28"><circle cx="14" cy="14" r="13"/><path d="M8 16.500l6-5.500 6 5.500" stroke-width="2.600"/></svg></button><h2>Messages</h2><p>2021/07/07 - 11:51:44: Total Execution Time: 00:00:00:40</p></div>
    </main>

    <aside class="help">
      <nav class="h-tabs"><button class="round" aria-label="Collapse help"><svg width="28" height="28" viewBox="0 0 28 28"><circle cx="14" cy="14" r="13"/><path d="M11.500 8.500L17 14l-5.500 5.500" stroke-width="3"/></svg></button><div><button>Test Settings</button><button>Terminal Settings</button><button class="on">Help</button></div></nav>
      <div class="h-scroll">
        <article>
          <h2>MOSFET Drain Family of Curves (vds-id)</h2>
          <svg class="fig" viewBox="0 0 282 222" width="282" height="222">
            <g fill="none" stroke="#333" stroke-width="1.500"><path d="M140 46v26h-39v78h39v26M90.500 83v55M44 111h46M102 111h134"/></g>
            <path d="M101 111l18-10v20z"/>
            <g fill="#4a6894"><path d="M118 3h44v43h-44zM0 89h44v44H0zM236 89h44v44h-44zM118 176h44v43h-44z"/></g>
            <g fill="none" stroke="#fff" stroke-width="2.200"><path d="M118 42l44-25M0 125h15v-13h13v-13h16M258 89v20M246 109h24l-12 20zM118 209h44"/></g>
            <g class="vtext"><text x="121" y="21">V</text><text x="3" y="107">V</text><text x="121" y="194">V</text></g>
          </svg>
          <p>The test generates the standard family of drain current versus drain voltage curves on a MOSFET. For each gate voltage step, the test sweeps the drain voltage and measures the resulting drain current. This test uses either three or four SMUs connected to the gate, drain, source, and bulk terminals of the MOSFET.</p>
          <h3>Required equipment</h3>
          <ul class="eq"><li>Three or four SMUs</li></ul>
          <h3>Videos</h3>
          <ul class="vids">
            <li><svg width="40" height="40"><use href="#film"/></svg><a href="#">Accuracy terms defined (English)</a></li>
            <li><svg width="40" height="40"><use href="#film"/></svg><a href="#">Accuracy terms defined (Japanese)</a></li>
            <li><svg width="40" height="40"><use href="#film"/></svg><a href="#">Accuracy terms defined (Chinese)</a></li>
            <li><svg width="40" height="40"><use href="#film"/></svg><a href="#">Accuracy terms defined (Korean)</a></li>
            <li><svg width="40" height="40"><use href="#film"/></svg><a href="#">Guarding explained (English)</a></li>
            <li><svg width="40" height="40"><use href="#film"/></svg><a href="#">Guarding explained (Japanese)</a></li>
            <li><svg width="40" height="40"><use href="#film"/></svg><a href="#">Guarding explained (Chinese)</a></li>
          </ul>
        </article>
        <div class="h-bar"><svg width="14" height="9" viewBox="0 0 14 9"><path d="M2 8l5-6 5 6" fill="none" stroke="#505050" stroke-width="2.500"/></svg><i></i><svg width="14" height="9" viewBox="0 0 14 9"><path d="M2 1l5 6 5-6" fill="none" stroke="#505050" stroke-width="2.500"/></svg></div>
      </div>
    </aside>
  </div>
  <div class="c-status"><i></i><i></i></div>

  <footer class="taskbar">
    <button aria-label="Start"><svg width="16" height="16"><use href="#win"/></svg></button><button aria-label="Search"><svg width="17" height="17"><use href="#lens"/></svg></button><button aria-label="Task view"><svg width="22" height="16"><use href="#tasks"/></svg></button><button aria-label="Command prompt"><svg width="24" height="20"><use href="#cmd"/></svg></button><button class="run" aria-label="Firefox"><svg width="24" height="24"><use href="#fox"/></svg></button><button class="run" aria-label="File Explorer"><svg width="24" height="20"><use href="#files"/></svg></button><button aria-label="Tool"><svg width="24" height="24"><use href="#green"/></svg></button><button aria-label="Acrobat"><svg width="22" height="22"><use href="#pdf"/></svg></button><button class="run on" aria-label="Clarius"><span class="cbig">C</span></button><button class="run" aria-label="Image viewer"><svg width="24" height="24"><use href="#cup"/></svg></button>
    <span class="grow"></span>
    <div class="tray">
      <svg width="12" height="8" viewBox="0 0 12 8"><path d="M.5 7L6 1.500 11.500 7" fill="none" stroke="#fff" stroke-width="1.300"/></svg>
      <svg width="16" height="14" viewBox="0 0 16 14"><path d="M.5 4.500H3l3.500-3.500v12L3 9.500H.500zM8.500 5c.8 1 .8 3 0 4" fill="none" stroke="#fff"/><path d="M11 3c1.800 2 1.800 6 0 8M13.500 1c2.500 3 2.500 9 0 12" fill="none" stroke="#888"/></svg>
      <svg width="16" height="14" viewBox="0 0 16 14"><path d="M4.500 1.500h11v8h-10zM7 13h7M10.500 10v3M.500.500h4v4h-4zM2.500 5v6" fill="none" stroke="#fff"/></svg>
      <svg width="24" height="14" viewBox="0 0 24 14"><path d="M.5.500h23v12H.500z" fill="none" stroke="#fff" stroke-width="1.300"/><path d="M3 4h18M3 6.500h18" stroke="#fff" stroke-width="1.200" stroke-dasharray="1.500 1"/><path d="M3 9.500h2M7 9.500h10M19 9.500h2" stroke="#fff" stroke-width="1.200"/></svg>
    </div>
    <time class="clock mid">11:52 AM<br>7/7/2021</time>
    <svg class="note" width="18" height="16" viewBox="0 0 18 16"><path d="M1 1h15.500v11.500h-5L9 15l-2.500-2.500H1z" fill="none" stroke="#fff" stroke-width="1.300"/></svg>
    <i class="peek"></i>
  </footer>
</section>
</body>
</html>
```
FILE: styles.css
```css
* { box-sizing: border-box; }
body { margin: 0; font-family: "Open Sans", "Noto Sans", sans-serif; font-size: 11px; color: #000; background: #efefef; }
button { font: inherit; color: inherit; background: none; border: 0; padding: 0; margin: 0; }
ul, ol { list-style: none; margin: 0; padding: 0; }
p, h1, h2, h3 { margin: 0; font-weight: 400; }
svg { flex: none; }
a { color: inherit; text-decoration: none; }
.sprite { position: absolute; width: 0; height: 0; }
.grow { flex: 1; }
.navy { color: #05609a; }
.screen { position: relative; display: flex; flex-direction: column; height: 50vh; min-height: 1080px; overflow: hidden; }

/* image viewer */
.viewer-title { display: flex; align-items: center; gap: 5px; height: 25px; padding: 0 2px; background: #fff; color: #999; }
.winbtns { display: flex; align-self: flex-start; }
.winbtns button { display: grid; place-items: center; width: 46px; height: 21px; }
.menu { display: flex; gap: 16px; height: 20px; padding: 0 8px; align-items: center; background: #fff; font-size: 12px; }
.tools { display: flex; align-items: center; height: 25px; border-bottom: 1px solid #c8c8c8; }
.tools button { display: grid; place-items: center; width: 23px; height: 24px; }
.tools svg { width: 16px; height: 16px; fill: none; stroke: #333; }
.tools svg.dim { stroke: #999; }
.tools i { width: 1px; height: 16px; margin: 0 3px 0 2px; background: #c6c6c6; }
.tools .grip { width: 2px; height: 18px; margin: 0 3px; background: repeating-linear-gradient(#bbb 0 2px, transparent 2px 5px); }
.progress { height: 17px; border: 1px solid #000; background: #909090; }
.progress span { display: block; width: 30px; height: 100%; background: #3bb3d3; }
.stage { flex: 1; }
.plot { position: absolute; left: 563px; top: 273px; width: 400px; height: 564px; background: #fff; font-family: "Liberation Sans", Arial, sans-serif; font-size: 9px; color: #00f; }
.plot-date { position: absolute; top: 0; left: 1px; color: #222; }
.plot-axis { position: absolute; left: 12px; top: 220px; writing-mode: vertical-rl; transform: rotate(180deg); white-space: nowrap; }
.ticks { position: absolute; top: 43px; left: 30px; display: flex; flex-direction: column; justify-content: space-between; height: 448px; }
.ticks li { line-height: 12px; }
.ticks .neg { margin-left: -4px; }

/* file explorer */
.explorer { position: absolute; left: 596px; right: 231px; top: 63px; background: #fff; border: 1px solid #9a9a9a; box-shadow: 0 2px 14px rgba(0, 0, 0, .35); }
.ex-head { display: flex; height: 30px; color: #999; }
.ex-quick { display: flex; align-items: center; gap: 8px; width: 229px; padding-left: 8px; color: #000; }
.ex-quick i { width: 1px; height: 13px; background: #aaa; }
.ex-ctx { width: 78px; margin-top: 3px; background: #f0ef84; color: #444; text-align: center; line-height: 28px; }
.ex-name { padding-left: 13px; line-height: 28px; }
.ex-head .winbtns button { height: 29px; }
.ex-tabs { display: flex; align-items: center; height: 24px; border-bottom: 1px solid #dadbdc; color: #444; padding-right: 4px; }
.ex-tabs button { height: 24px; }
.t-file { width: 56px; background: #1979ca; color: #fff; }
.t-home { width: 58px; background: #f5f6f7; border: 1px solid #dadbdc; border-bottom: 0; }
.t-share { width: 58px; }
.t-view { width: 54px; }
.t-manage { width: 78px; margin-left: 3px; border: 1px solid #dadbdc; border-width: 0 1px; }
.help-dot { width: 14px; height: 14px; margin-left: 11px; border-radius: 50%; background: #0a76d3; color: #fff; text-align: center; line-height: 14px; font-weight: 700; }
.ribbon { display: flex; height: 91px; background: #f5f6f7; border-bottom: 1px solid #dadbdc; color: #333; }
.group { display: flex; flex-direction: column; margin: 3px 0 2px; border-right: 1px solid #dcdddf; }
.group p { line-height: 16px; text-align: center; color: #5a5a5a; }
.items { display: flex; height: 72px; }
.g-clip { width: 263px; padding-left: 7px; }
.g-org { width: 191px; padding-left: 3px; }
.g-new { width: 145px; padding-left: 4px; }
.g-open { width: 133px; padding-left: 4px; }
.g-sel { width: 115px; padding-left: 2px; }
.group p { margin-right: 4px; }
.big { display: flex; flex-direction: column; align-items: center; line-height: 13px; padding-top: 4px; }
.big > svg { margin-bottom: 4px; }
.big > svg.pinbig { margin: 3px 0 7px; color: #aab9d0; }
.off { color: #8b8b8b; }
.w64 { width: 64px; } .w44 { width: 44px; } .w42 { width: 42px; } .w40 { width: 40px; } .w50 { width: 50px; } .w55 { width: 55px; }
.thin { width: 1px; height: 54px; margin: 4px 4px 0; background: #dcdddf; }
.stack { padding-left: 5px; }
.stack button { display: flex; align-items: center; gap: 3px; height: 22px; white-space: nowrap; }
.address { display: flex; align-items: center; height: 35px; padding: 0 12px 0 5px; }
.arr { width: 29px; height: 22px; }
.arr.sm { width: 20px; }
.crumbs { display: flex; align-items: center; gap: 8px; flex: 1; height: 23px; margin-left: 3px; padding-left: 4px; border: 1px solid #d9d9d9; color: #111; }
.crumbs svg { color: #777; }
.crumbs .here { margin-right: -4px; }
.reload { width: 20px; height: 21px; margin-left: -4px; border-left: 1px solid #d9d9d9; }
.search { display: flex; align-items: center; width: 202px; height: 23px; margin-left: 12px; padding: 0 8px; border: 1px solid #d9d9d9; color: #666; }
.search input { flex: 1; min-width: 0; border: 0; padding: 0; font: inherit; background: none; }
.search input::placeholder { color: #6d6d6d; opacity: 1; }
.ex-body { display: flex; align-items: stretch; }
.side { width: 351px; padding-top: 16px; border-right: 1px solid #f0f0f0; }
.side li { display: flex; align-items: center; gap: 6px; height: 24px; margin-right: 2px; padding: 0 3px 0 31px; }
.side li.top { padding-left: 24px; }
.side li.top ~ li.top { margin-top: 8px; }
.side svg { width: 16px; height: 16px; }
.side .pin { width: 11px; height: 11px; margin-left: auto; color: #8c959c; }
.on { background: #d9d9d9; }
.list { position: relative; flex: 1; padding-left: 15px; }
.sort { position: absolute; left: 138px; top: 1px; }
table { border-collapse: collapse; table-layout: fixed; width: 577px; color: #6d6d6d; }
th { height: 25px; padding: 0 0 0 7px; font-weight: 400; text-align: left; color: #4c607a; border-right: 1px solid #e5e5e5; }
th:first-child { width: 257px; padding-left: 4px; }
th:nth-child(2), th:nth-child(3) { width: 120px; }
td { height: 21px; padding: 0 0 0 7px; line-height: 21px; white-space: nowrap; }
td:first-child { padding-left: 4px; color: #000; }
td:last-child { text-align: right; padding-right: 7px; }
td svg { width: 16px; height: 16px; margin-right: 5px; vertical-align: -4px; color: #0f9a6c; }
.cut td { height: 14px; }
.cut div { display: flex; align-items: flex-end; height: 14px; overflow: hidden; }
.cut svg { margin-bottom: 2px; }
.cut td:last-child div { justify-content: flex-end; }
.bar { display: flex; flex-direction: column; align-items: center; width: 15px; margin-right: 1px; padding: 6px 0; background: #f0f0f0; }
.thumb { width: 15px; height: 354px; margin: 240px 0 auto; background: #cdcdcd; }
.status { display: flex; align-items: center; gap: 20px; height: 24px; padding: 0 4px 0 14px; color: #1e395b; }
.view { display: grid; place-items: center; width: 22px; height: 22px; }
.view.on { background: #cce8f6; border: 1px solid #26a0da; }
.view + .view { margin-left: -20px; }

/* taskbar */
.taskbar { display: flex; align-items: center; gap: 1px; height: 40px; background: #030305; color: #fff; }
.taskbar button { display: grid; place-items: center; width: 48px; height: 40px; }
.taskbar button:nth-child(2), .taskbar button:nth-child(3) { margin-left: -1px; }
.taskbar button:nth-child(4) { margin-left: 1px; }
.taskbar .run { background: linear-gradient(#76b9ed, #76b9ed) center bottom / 40px 2px no-repeat; }
.taskbar .run.on { background: linear-gradient(#76b9ed, #76b9ed) center bottom / 48px 2px no-repeat #333336; }
.cbig, .csm { display: grid; place-items: center; width: 24px; height: 24px; background: #00617f; color: #fff; font: 700 19px "Liberation Serif", serif; }
.csm { width: 16px; height: 16px; font-size: 13px; }
.clock { font-size: 11px; line-height: 18px; }
.clock.end { text-align: right; padding-right: 9px; }
.clock.mid { width: 64px; margin-left: 5px; text-align: center; }
.tray { display: flex; align-items: center; gap: 17px; }
.note { margin: 0 18px 0 11px; }
.peek { width: 5px; height: 40px; border-left: 1px solid #444; }

/* Clarius */
.clarius { font-family: Roboto, "Open Sans", sans-serif; font-size: 14px; color: #333; background: #fdfdfd; }
.c-title { display: flex; align-items: center; gap: 5px; height: 24px; padding: 0 2px; background: #fff; color: #000; border-bottom: 1px solid #a0a0a0; font-family: "Open Sans", sans-serif; font-size: 11px; }
.c-head { display: flex; height: 117px; color: #4a6894; }
.stage-btn { display: flex; flex-direction: column; align-items: center; gap: 5px; width: 80px; margin-top: 9px; height: 100px; font-family: "Open Sans", sans-serif; font-size: 14px; }
.s1 { margin-left: 35px; }
.step { margin: 31px 8px 0 10px; }
.s2 { margin-right: 4px; }
.acts, .reds { display: flex; padding-top: 31px; }
.acts button, .reds button { display: flex; flex-direction: column; align-items: center; height: 70px; gap: 1px; line-height: 17px; }
.acts { padding-right: 10px; }
.acts button { width: 100px; }
.acts button:first-child { width: 88px; }
.acts .gray { color: #999; }
.reds { width: 430px; background: #f7f7f7; }
.reds button:first-child { width: 88px; }
.reds button:nth-child(2) { width: 108px; }
.reds button:nth-child(3) { width: 92px; }
.reds button:last-child { width: 124px; }
.c-body { display: grid; grid-template: minmax(0, 1fr) / 400px 1fr 430px; flex: 1; min-height: 0; border-top: 2px solid #000; }
.round { display: block; width: 28px; height: 28px; }
.round svg { fill: #fff; stroke: #4a6894; stroke-width: 2; }
.round path { fill: none; }

.tree { border-right: 2px solid #000; }
.tree-tools { display: flex; height: 64px; padding: 5px 8px 0 10px; color: #4a6894; }
.tree-tools button { display: flex; flex-direction: column; align-items: center; width: 59px; line-height: 17px; gap: 3px; font-size: 13px; }
.tree-tools button.round { width: 28px; margin: 14px 5px 0 0; }
.tree-tools button:last-child { width: 42px; }
.faint { color: #ccd4e2; }
.project { height: 35px; padding-left: 10px; line-height: 36px; font-size: 16px; }
.tree label { display: flex; align-items: center; height: 44px; padding-right: 16px; font-size: 16px; }
.tree label span { flex: 1; }
.node { padding-left: 38px; gap: 9px; }
.open { background: linear-gradient(to bottom right, transparent 50%, #4a6894 50%) 6px 17px / 14px 13px no-repeat; }
.leaf { padding-left: 56px; background: linear-gradient(#999, #999) 30px 0 / 1px 100% no-repeat, linear-gradient(#bbb, #bbb) 30px 21px / 20px 1px no-repeat; }
.leaf.last { background-size: 1px 22px, 20px 1px; }
.leaf.on { background-color: #cedaea; }
input[type=checkbox] { appearance: none; flex: none; width: 24px; height: 24px; margin: 0; border: 1px solid #1f3a66; background: #fff; }
input[type=checkbox]:checked { background: #4a6894 url("data:image/svg+xml,%3Csvg xmlns='http://www.w3.org/2000/svg' viewBox='0 0 22 22'%3E%3Cpath d='M5 12l3.500 4.500L16 6' fill='none' stroke='%23fff' stroke-width='3'/%3E%3C/svg%3E") center / 22px no-repeat; }

.work { display: flex; flex-direction: column; min-width: 0; }
.work-head { display: flex; justify-content: space-between; height: 65px; padding: 14px 47px 0 11px; }
h1 { font-size: 21px; line-height: 38px; color: #111; }
.seg { display: flex; width: 269px; height: 37px; border: 2px solid #a8a8a8; border-radius: 5px; overflow: hidden; background: #fff; font-size: 16px; color: #000; }
.seg button { width: 124px; padding-top: 5px; }
.seg .on { width: 134px; background: #a5b8d3; color: #fff; border-right: 1px solid #a8a8a8; }
.board { display: grid; grid-template-columns: 335px 1fr auto; flex: 1; padding: 0 5px 0 16px; }
.panel { width: 335px; border: 2px solid #a8a8a8; border-radius: 8px 8px 5px 5px; background: #fff; font-size: 15px; overflow: hidden; }
.gate { align-self: start; margin-top: 225px; }
.wires { margin-top: 152px; justify-self: center; }
.right-stack { display: flex; flex-direction: column; align-items: flex-end; }
.drain { width: 358px; border-right-width: 3px; }
.bulk { margin: 16px 11px 63px 0; }
.source { margin-right: 11px; }
.p-head { display: flex; gap: 9px; height: 43px; padding: 4px 5px 0 0; background: #a8a8a8; font-size: 16px; }
.p-head label { width: 116px; text-align: right; line-height: 38px; }
.drain .p-head { background: #a5b8d3; }
.p-body { display: flex; flex-direction: column; gap: 9px; padding: 6px 0; }
.row { display: flex; align-items: center; height: 36px; }
.row label { width: 117px; margin-right: 9px; text-align: right; white-space: nowrap; }
.row input { width: 177px; height: 36px; padding: 2px 8px 0; margin-right: 5px; border: 1px solid #4a6894; font: 15px Roboto, sans-serif; color: #000; background: #fff; }
select { appearance: none; width: 195px; height: 36px; padding: 2px 6px 0; border: 1px solid #4a6894; border-radius: 0; color: #333; font: 15px Roboto, sans-serif; background: #fff url("data:image/svg+xml,%3Csvg xmlns='http://www.w3.org/2000/svg' viewBox='0 0 31 34'%3E%3Cpath d='M1.500 5v26' stroke='%234a6894'/%3E%3Cpath d='M10 13h11l-5.500 8z' fill='%234a6894'/%3E%3C/svg%3E") right center / 31px 34px no-repeat; }
.p-head select { flex: 1; width: auto; font-size: 14px; background-position: calc(100% + 2px) center; }
.checks { display: flex; height: 24px; margin: 5px 0 6px 26px; }
.checks label { display: flex; flex: none; align-items: center; gap: 5px; width: 158px; white-space: nowrap; }
.p-split { display: flex; }
.p-split .p-body { width: 331px; padding-bottom: 5px; }
.p-bar { display: flex; flex-direction: column; align-items: center; margin-left: 2px; padding: 7px 0 8px; }
.p-bar i { width: 16px; height: 167px; margin: 8px 0 auto; background: #4a6894; }
.messages { display: flex; align-items: center; height: 40px; padding-left: 12px; border-top: 2px solid #000; }
.messages .round { margin-top: 4px; }
.messages h2 { width: 118px; margin-left: 19px; font-size: 21px; padding-top: 4px; }
.messages p { font-size: 16px; color: #00f; padding-top: 4px; }
.vtext { fill: #fff; font: 700 20px Roboto, sans-serif; }
.vtext .o { font-size: 15px; }

.help { display: flex; flex-direction: column; min-height: 0; border-left: 2px solid #000; background: #fff; }
.h-tabs { display: flex; height: 40px; padding: 2px 0 0 5px; color: #4a6894; }
.h-tabs > .round { margin-top: 5px; }
.h-tabs div { display: flex; flex: 1; height: 37px; margin-left: 14px; border-bottom: 2px solid #b0b0b0; }
.h-tabs div button { height: 36px; margin: 0 14px 0 12px; font-size: 16px; white-space: nowrap; }
.h-tabs div button.on { width: 57px; margin: 0; background: #4a6894; color: #fff; border-radius: 4px 4px 0 0; }
.h-scroll { display: flex; flex: 1; min-height: 0; }
article { flex: 1; min-width: 0; padding: 18px 2px 0 2px; overflow: hidden; font-size: 16px; line-height: 21px; color: #000; }
article h2 { height: 34px; padding-left: 13px; line-height: 35px; background: #00609c; color: #fff; font-size: 16px; font-weight: 700; }
.fig { display: block; margin: 5px 0 6px; }
article h3 { margin-top: 9px; font-size: 15px; font-weight: 700; line-height: 19px; border-bottom: 3px solid #999; }
.eq { margin: 8px 0 0 22px; padding-left: 18px; list-style: square; }
.vids { padding-top: 8px; }
.vids li { display: flex; align-items: flex-end; gap: 4px; height: 40px; margin-bottom: 8px; }
.vids a { color: #0a66c8; text-decoration: underline; }
.h-bar { display: flex; flex-direction: column; align-items: center; width: 15px; background: #f0f0f0; padding: 16px 0 16px; }
.h-bar i { width: 15px; height: 469px; margin: 9px 0 auto; background: #cdcdcd; }
.c-status { display: flex; justify-content: flex-end; height: 23px; border-top: 4px solid #efefef; background: #efefef; box-shadow: inset 0 1px #d0d0d0; }
.c-status i { width: 36px; margin-top: 2px; border-left: 1px solid #d0d0d0; }
```
